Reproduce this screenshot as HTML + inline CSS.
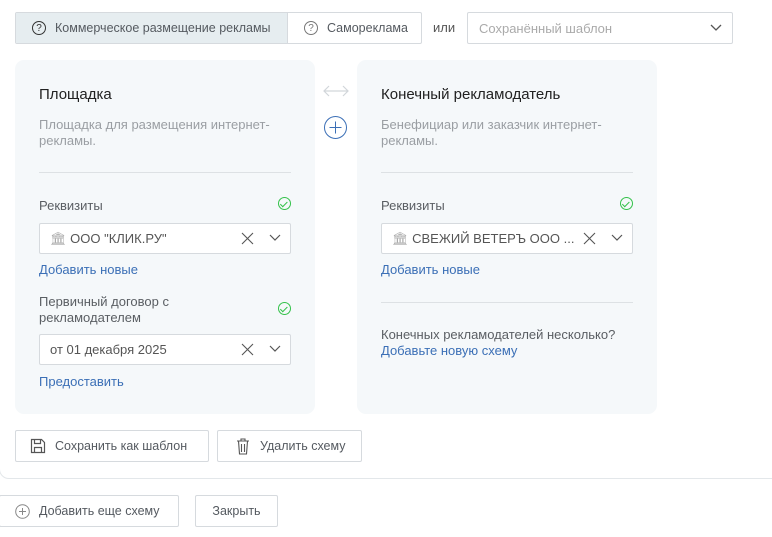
<!DOCTYPE html>
<html><head><meta charset="utf-8"><style>
*{box-sizing:border-box;margin:0;padding:0}
body{width:772px;height:537px;background:#fff;font-family:"Liberation Sans",Arial,sans-serif;font-size:13px;color:#333;position:relative;overflow:hidden}
.abs{position:absolute}
.outer{left:-1px;top:-20px;width:790px;height:499px;border:1px solid #e3e7ea;border-radius:10px}
.tabs{left:15px;top:12px;height:32px;width:407px;border:1px solid #d6dade;display:flex;border-radius:2px}
.tab{display:flex;align-items:center;height:30px;color:#555a60;font-size:12.5px;white-space:nowrap}
.q{width:14px;height:14px;border:1px solid #333;border-radius:50%;font-size:10px;display:inline-flex;align-items:center;justify-content:center;margin-right:9px;color:#333;flex:none}
.sel{left:467px;top:12px;width:266px;height:32px;border:1px solid #d6dade;border-radius:2px;color:#aaa;padding:8px 11px;font-size:13px}
.card{background:#f5f8fa;border-radius:9px;top:60px;width:300px;height:354px}
.h{font-size:15px;color:#222;position:absolute;left:24px;top:26px}
.d{color:#9a9ea3;position:absolute;left:24px;top:57px;line-height:16px;width:250px}
.sep{position:absolute;left:24px;width:252px;height:1px;background:#dde1e4}
.lbl{position:absolute;left:24px;color:#5a5e63;line-height:16px}
.ok{position:absolute;width:13px;height:13px;border:1.3px solid #34c24a;border-radius:50%}
.ok:after{content:"";position:absolute;left:3px;top:1.5px;width:3px;height:5.5px;border:solid #34c24a;border-width:0 1.3px 1.3px 0;transform:rotate(45deg)}
.inp{position:absolute;left:24px;width:252px;height:31px;background:#fff;border:1px solid #d6dade;border-radius:2px;padding:7px 10px;color:#555;white-space:nowrap}
.link{position:absolute;left:24px;color:#3b6fb6}
.x{position:absolute;right:36px;top:8px}
.chev{position:absolute;right:9px;top:10px}
.btn{height:32px;border:1px solid #d6dade;border-radius:2px;display:flex;align-items:center;color:#555a60;padding:0 14px;background:#fff;white-space:nowrap;font-size:12.5px}
</style></head><body>
<div class="abs outer"></div>
<div class="abs tabs">
 <div class="tab" style="width:272px;background:#e6edf0;padding-left:16px;border-right:1px solid #d6dade"><span class="q">?</span>Коммерческое размещение рекламы</div>
 <div class="tab" style="padding-left:16px"><span class="q" style="border-color:#777;color:#777">?</span>Самореклама</div>
</div>
<div class="abs" style="left:433px;top:20px;color:#555">или</div>
<div class="abs sel">Сохранённый шаблон<svg style="position:absolute;right:10px;top:11px" width="12" height="8"><path d="M1 1l5 5 5-5" stroke="#555" fill="none" stroke-width="1.3"/></svg></div>

<div class="abs card" style="left:15px">
 <div class="h">Площадка</div>
 <div class="d">Площадка для размещения интернет-рекламы.</div>
 <div class="sep" style="top:112px"></div>
 <div class="lbl" style="top:138px">Реквизиты</div>
 <div class="ok" style="left:263px;top:137px"></div>
 <div class="inp" style="top:163px"><span style="color:#aaa">🏛</span> ООО "КЛИК.РУ"
  <svg class="x" width="13" height="13"><path d="M1 1l11 11M12 1L1 12" stroke="#555" stroke-width="1.1"/></svg>
  <svg class="chev" width="12" height="8"><path d="M1 1l5 5 5-5" stroke="#555" fill="none" stroke-width="1.2"/></svg></div>
 <div class="link" style="top:202px">Добавить новые</div>
 <div class="lbl" style="top:234px">Первичный договор с<br>рекламодателем</div>
 <div class="ok" style="left:263px;top:242px"></div>
 <div class="inp" style="top:274px">от 01 декабря 2025
  <svg class="x" width="13" height="13"><path d="M1 1l11 11M12 1L1 12" stroke="#555" stroke-width="1.1"/></svg>
  <svg class="chev" width="12" height="8"><path d="M1 1l5 5 5-5" stroke="#555" fill="none" stroke-width="1.2"/></svg></div>
 <div class="link" style="top:314px">Предоставить</div>
</div>

<svg class="abs" style="left:322px;top:84px" width="28" height="14"><path d="M2 7h24M7 2L2 7l5 5M21 2l5 5-5 5" stroke="#d2d6da" fill="none" stroke-width="1.2"/></svg>
<svg class="abs" style="left:323px;top:115px" width="25" height="25"><circle cx="12.5" cy="12.5" r="11" stroke="#3b6fb6" fill="none" stroke-width="1"/><path d="M12.5 6.5v12M6.5 12.5h12" stroke="#3b6fb6" stroke-width="1"/></svg>

<div class="abs card" style="left:357px">
 <div class="h">Конечный рекламодатель</div>
 <div class="d">Бенефициар или заказчик интернет-рекламы.</div>
 <div class="sep" style="top:112px"></div>
 <div class="lbl" style="top:138px">Реквизиты</div>
 <div class="ok" style="left:263px;top:137px"></div>
 <div class="inp" style="top:163px"><span style="color:#aaa">🏛</span> СВЕЖИЙ ВЕТЕРЪ ООО ...
  <svg class="x" width="13" height="13"><path d="M1 1l11 11M12 1L1 12" stroke="#555" stroke-width="1.1"/></svg>
  <svg class="chev" width="12" height="8"><path d="M1 1l5 5 5-5" stroke="#555" fill="none" stroke-width="1.2"/></svg></div>
 <div class="link" style="top:202px">Добавить новые</div>
 <div class="sep" style="top:242px"></div>
 <div class="lbl" style="top:267px">Конечных рекламодателей несколько?</div>
 <div class="link" style="top:283px">Добавьте новую схему</div>
</div>

<div class="abs btn" style="left:15px;top:430px;width:194px"><svg width="16" height="16" style="margin-right:9px;flex:none"><path d="M1.5 1.5h10l3 3v10h-13z" stroke="#555" fill="none" stroke-width="1.2"/><path d="M4.5 1.5v4h6v-4M4.5 14.5v-5h7v5" stroke="#555" fill="none" stroke-width="1.2"/></svg>Сохранить как шаблон</div>
<div class="abs btn" style="left:217px;top:430px;width:145px;padding-left:18px"><svg width="14" height="17" style="margin-right:10px;flex:none"><path d="M1 3h12M5 3V1h4v2M2.5 3l1 13h7l1-13M5.5 6v8M8.5 6v8" stroke="#555" fill="none" stroke-width="1.1"/></svg>Удалить схему</div>
<div class="abs btn" style="left:-1px;top:495px;width:180px;padding-left:15px"><svg width="15" height="15" style="margin-right:9px;flex:none"><circle cx="7.5" cy="7.5" r="6.8" stroke="#888" fill="none"/><path d="M7.5 4v7M4 7.5h7" stroke="#888"/></svg>Добавить еще схему</div>
<div class="abs btn" style="left:195px;top:495px;width:83px;justify-content:center;padding:0">Закрыть</div>
</body></html>
